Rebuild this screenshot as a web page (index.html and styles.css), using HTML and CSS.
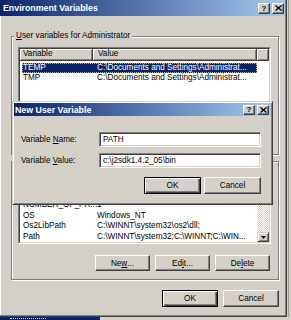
FILE: index.html
```html
<!DOCTYPE html>
<html lang="en">
<head>
    <meta charset="UTF-8">
    <meta name="viewport" content="width=device-width, initial-scale=1.0">
    <title>Environment Variables</title>
    <link rel="stylesheet" href="styles.css">
</head>
<body>
    <div class="screen">
        <div class="window">
            <div class="titlebar">
                <span class="title">Environment Variables</span>
                <span class="cap-btn help">?</span>
                <span class="cap-btn"><svg width="7" height="6" viewBox="0 0 7 6"><path d="M0.5 0.5 L6.5 5.5 M6.5 0.5 L0.5 5.5" stroke="#000" stroke-width="1.3"/></svg></span>
            </div>

            <div class="client">
                <!-- user variables -->
                <div class="group">
                    <span class="group-label"><u>U</u>ser variables for Administrator</span>
                    <div class="listview user-list">
                        <div class="lv-inner">
                            <div class="lv-main">
                                <div class="lv-header">
                                    <span class="h-cell h-var">Variable</span>
                                    <span class="h-cell h-val">Value</span>
                                    <span class="h-cell h-pad"></span>
                                </div>
                                <div class="lv-rows">
                                    <div class="lv-row selected"><span class="c-var">TEMP</span><span class="c-val">C:\Documents and Settings\Administrat...</span></div>
                                    <div class="lv-row"><span class="c-var">TMP</span><span class="c-val">C:\Documents and Settings\Administrat...</span></div>
                                </div>
                            </div>
                        </div>
                    </div>
                    <div class="btn-row">
                        <span class="btn"><u>N</u>ew...</span>
                        <span class="btn"><u>E</u>dit...</span>
                        <span class="btn"><u>D</u>elete</span>
                    </div>
                </div>

                <!-- system variables -->
                <div class="group group-sys">
                    <span class="group-label"><u>S</u>ystem variables</span>
                    <div class="listview sys-list">
                        <div class="lv-inner">
                            <div class="lv-main">
                                <div class="lv-header">
                                    <span class="h-cell h-var">Variable</span>
                                    <span class="h-cell h-val">Value</span>
                                </div>
                                <div class="lv-rows">
                                    <div class="lv-row"><span class="c-var">ComSpec</span><span class="c-val">C:\WINNT\system32\cmd.exe</span></div>
                                    <div class="lv-row"><span class="c-var">NUMBER_OF_PR...</span><span class="c-val">1</span></div>
                                    <div class="lv-row"><span class="c-var">OS</span><span class="c-val">Windows_NT</span></div>
                                    <div class="lv-row"><span class="c-var">Os2LibPath</span><span class="c-val">C:\WINNT\system32\os2\dll;</span></div>
                                    <div class="lv-row"><span class="c-var">Path</span><span class="c-val">C:\WINNT\system32;C:\WINNT;C:\WIN...</span></div>
                                </div>
                            </div>
                            <div class="scrollbar">
                                <span class="sb-btn"><svg width="5" height="3" viewBox="0 0 5 3"><path d="M2.5 0 L5 3 L0 3 Z" fill="#000"/></svg></span>
                                <span class="sb-thumb"></span>
                                <span class="sb-track"></span>
                                <span class="sb-btn"><svg width="5" height="3" viewBox="0 0 5 3"><path d="M0 0 L5 0 L2.5 3 Z" fill="#000"/></svg></span>
                            </div>
                        </div>
                    </div>
                    <div class="btn-row">
                        <span class="btn">Ne<u>w</u>...</span>
                        <span class="btn">Ed<u>i</u>t...</span>
                        <span class="btn">De<u>l</u>ete</span>
                    </div>
                </div>

                <div class="dialog-buttons">
                    <span class="btn btn-default wide">OK</span>
                    <span class="btn wide">Cancel</span>
                </div>
            </div>

            <!-- New User Variable dialog on top -->
            <div class="popup">
                <div class="titlebar small">
                    <span class="title">New User Variable</span>
                    <span class="cap-btn help">?</span>
                    <span class="cap-btn"><svg width="7" height="6" viewBox="0 0 7 6"><path d="M0.5 0.5 L6.5 5.5 M6.5 0.5 L0.5 5.5" stroke="#000" stroke-width="1.3"/></svg></span>
                </div>
                <div class="popup-body">
                    <div class="field">
                        <label class="field-label">Variable <u>N</u>ame:</label>
                        <div class="input">PATH</div>
                    </div>
                    <div class="field">
                        <label class="field-label">Variable <u>V</u>alue:</label>
                        <div class="input">c:\j2sdk1.4.2_05\bin</div>
                    </div>
                    <div class="popup-buttons">
                        <span class="btn btn-default">OK</span>
                        <span class="btn">Cancel</span>
                    </div>
                </div>
            </div>
        </div>
        <div class="backdrop"></div>
    </div>
    <div class="taskbar">
        <span class="task-item"><span class="task-dots"></span></span>
    </div>
</body>
</html>
```

FILE: styles.css
```css
:root {
    --face: #d4d0c8;
    --shadow: #808080;
    --dark: #404040;
    --navy: #0a246a;
    --sky: #a6caf0;
}

* {
    margin: 0;
    padding: 0;
    box-sizing: border-box;
}

body {
    width: 291px;
    height: 320px;
    overflow: hidden;
    background-color: var(--face);
    color: #000;
    font-family: "Liberation Sans", Arial, sans-serif;
    font-size: 8.2px;
}

u {
    text-decoration: underline;
    text-underline-offset: 1px;
}

.screen {
    display: flex;
    height: 317px;
}

.window {
    position: relative;
    width: 287px;
    height: 317px;
    display: flex;
    flex-direction: column;
    background-color: var(--face);
    border-right: 1px solid var(--dark);
    border-bottom: 1px solid var(--dark);
    box-shadow: inset -1px -1px var(--shadow), inset 1px 0 #fff;
}

.backdrop {
    flex: 1;
    margin-left: 1px;
    border-left: 1px solid #9c988f;
}

/* title bars */
.titlebar {
    display: flex;
    align-items: center;
    height: 16px;
    margin-right: 1px;
    padding: 0 1px 0 3px;
    background: linear-gradient(to right, var(--navy), var(--sky));
    color: #fff;
    font-size: 8.8px;
    font-weight: bold;
}

.title {
    flex: 1;
    white-space: nowrap;
}

.cap-btn {
    display: flex;
    align-items: center;
    justify-content: center;
    width: 12px;
    height: 11px;
    background-color: var(--face);
    border: 1px solid;
    border-color: #fff var(--dark) var(--dark) #fff;
    box-shadow: inset -1px -1px var(--shadow);
    color: #000;
    font-size: 8px;
    line-height: 9px;
}

.cap-btn + .cap-btn {
    margin-left: 2px;
}

.titlebar.small {
    height: 13px;
    margin-right: 0;
    padding: 0 2px 0 1px;
}

.titlebar.small .cap-btn {
    height: 10px;
}

/* client area */
.client {
    display: flex;
    flex-direction: column;
    padding: 20px 0 0 11px;
}

.group {
    display: flex;
    flex-direction: column;
    width: 268px;
    height: 119px;
    padding: 0 7px 0 6px;
    border: 1px solid var(--shadow);
    box-shadow: inset 1px 1px #fff, 1px 1px #fff;
}

.group-sys {
    margin-top: 6px;
}

.group-label {
    align-self: flex-start;
    height: 11px;
    margin: -7px 0 0 -4px;
    padding: 0 2px;
    line-height: 11px;
    background-color: var(--face);
    white-space: nowrap;
}

.listview {
    height: 72px;
    margin-top: 6px;
    border: 1px solid;
    border-color: var(--shadow) #fff #fff var(--shadow);
}

.sys-list {
    height: 70px;
    margin-top: 8px;
}

.lv-inner {
    display: flex;
    height: 100%;
    border: 1px solid;
    border-color: var(--dark) var(--face) var(--face) var(--dark);
    background-color: #fff;
}

.lv-main {
    flex: 1;
    display: flex;
    flex-direction: column;
    min-width: 0;
}

.lv-header {
    display: flex;
    height: 12px;
}

.h-cell {
    height: 12px;
    line-height: 10px;
    background-color: var(--face);
    border-right: 1px solid var(--dark);
    border-bottom: 1px solid var(--dark);
    box-shadow: inset 1px 1px #fff, inset -1px -1px var(--shadow);
    white-space: nowrap;
}

.h-var {
    width: 73px;
    padding-left: 3px;
}

.h-val {
    width: 164px;
    padding-left: 5px;
}

.h-pad {
    flex: 1;
}

.lv-rows {
    flex: 1;
    overflow: hidden;
    padding-top: 2px;
}

.lv-row {
    display: flex;
    width: 235px;
    height: 10.4px;
    margin-left: 2px;
    line-height: 10.4px;
    white-space: nowrap;
}

.lv-row.selected {
    background-color: var(--navy);
    color: #fff;
    outline: 1px dotted #b8b49c;
    outline-offset: -1px;
}

.c-var {
    width: 75px;
    padding-left: 1px;
    overflow: hidden;
}

.c-val {
    flex: 1;
    overflow: hidden;
}

/* scrollbar */
.scrollbar {
    display: flex;
    flex-direction: column;
    width: 12px;
}

.sb-btn,
.sb-thumb {
    display: flex;
    align-items: center;
    justify-content: center;
    background-color: var(--face);
    border: 1px solid;
    border-color: var(--face) var(--dark) var(--dark) var(--face);
    box-shadow: inset 1px 1px #fff, inset -1px -1px var(--shadow);
}

.sb-btn {
    height: 10px;
}

.sb-thumb {
    height: 12px;
}

.sb-track {
    flex: 1;
    background: repeating-conic-gradient(#fff 0 25%, var(--face) 0 50%) 0 0 / 2px 2px;
}

/* buttons */
.btn-row {
    display: flex;
    justify-content: flex-end;
    gap: 5px;
    margin: 11px 1px 0 0;
}

.btn {
    display: flex;
    align-items: center;
    justify-content: center;
    width: 55px;
    height: 16px;
    background-color: var(--face);
    border: 1px solid;
    border-color: #fff var(--dark) var(--dark) #fff;
    box-shadow: inset -1px -1px var(--shadow);
    white-space: nowrap;
}

.btn-default {
    border-color: #000;
    box-shadow: inset 1px 1px #fff, inset -1px -1px var(--dark), inset -2px -2px var(--shadow);
}

.dialog-buttons {
    display: flex;
    justify-content: flex-end;
    gap: 5px;
    width: 268px;
    margin-top: 10px;
}

.btn.wide {
    width: 56px;
    height: 17px;
}

/* New User Variable */
.popup {
    position: absolute;
    left: 12px;
    top: 101px;
    width: 261px;
    height: 104px;
    padding: 1px;
    background-color: var(--face);
    border: 1px solid;
    border-color: var(--face) var(--dark) var(--dark) var(--face);
    box-shadow: inset 1px 1px #fff, inset -1px -1px var(--shadow);
}

.popup-body {
    display: flex;
    flex-direction: column;
    padding: 16px 10px 0 7px;
}

.field {
    display: flex;
    align-items: center;
    height: 15px;
}

.field + .field {
    margin-top: 6px;
}

.field-label {
    width: 78px;
    white-space: nowrap;
}

.input {
    flex: 1;
    height: 15px;
    padding-left: 3px;
    line-height: 13px;
    background-color: #fff;
    border: 1px solid;
    border-color: var(--shadow) #fff #fff var(--shadow);
    box-shadow: inset 1px 1px var(--dark), inset -1px -1px var(--face);
    white-space: nowrap;
}

.popup-buttons {
    display: flex;
    justify-content: flex-end;
    gap: 3px;
    margin-top: 9px;
}

.popup-buttons .btn {
    width: 57px;
    height: 17px;
}

/* strip of the taskbar at the bottom */
.taskbar {
    display: flex;
    height: 3px;
    overflow: hidden;
}

.task-item {
    width: 100px;
    padding: 1px 0 0 10px;
    background-color: var(--navy);
}

.task-dots {
    display: block;
    width: 36px;
    border-top: 1px dotted #c8d0e8;
}
```
